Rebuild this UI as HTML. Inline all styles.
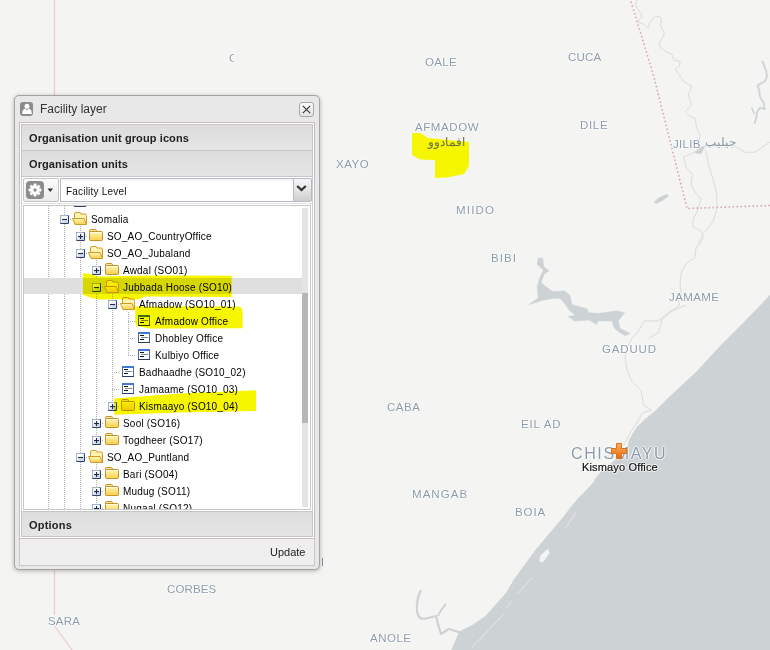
<!DOCTYPE html>
<html><head><meta charset="utf-8"><style>
html,body{margin:0;padding:0;width:770px;height:650px;overflow:hidden;background:#f4f4f2;font-family:"Liberation Sans",sans-serif}
.ml{position:absolute;white-space:nowrap;font-size:11.5px;line-height:1;color:#8b9bab;text-shadow:1px 0 1px rgba(255,255,255,.8),-1px 0 1px rgba(255,255,255,.8),0 1px 1px rgba(255,255,255,.8),0 -1px 1px rgba(255,255,255,.8)}
.ic{position:absolute;display:block}
.vl{position:absolute;width:1px;background:repeating-linear-gradient(to bottom,#b4b4b4 0 1px,transparent 1px 2px)}
.hl{position:absolute;height:1px;background:repeating-linear-gradient(to right,#b4b4b4 0 1px,transparent 1px 2px)}
.tt{position:absolute;white-space:nowrap;font-size:10px;letter-spacing:0.2px;line-height:1;color:#000}
.hd{position:absolute;left:21px;width:290px;background:linear-gradient(#dddddd,#e5e5e5);border:1px solid #c6c6c6;font-weight:bold;font-size:11px;color:#222}
</style></head><body>
<svg width="770" height="650" style="position:absolute;left:0;top:0">
 <defs>
  <linearGradient id="gf" x1="0" y1="0" x2="0" y2="1"><stop offset="0" stop-color="#fff7b8"/><stop offset="1" stop-color="#f7cf48"/></linearGradient>
  <linearGradient id="gb" x1="0" y1="0" x2="0.6" y2="1"><stop offset="0.3" stop-color="#ffffff"/><stop offset="1" stop-color="#c8d2ea"/></linearGradient>
 </defs>
 <!-- sea -->
 <path d="M770 295 L746 320 L720 346 L696 372 L670 396 L656 410 L644.3 419.7 L636.9 427.1 L632 434.5 L628.9 440.6 L627.5 447 L615 460 L604 469 L600.6 472 L594.5 479.4 L593.2 482.5 L588.3 488 L584.6 491.7 L578.5 497.8 L571.1 506.5 L563.7 516.3 L561.2 519.2 L535 550.6 L514 579.3 L506.3 592.4 L485.4 616 L472.3 625 L459.2 631.6 L451.4 650 L770 650 Z" fill="#cdd2d5"/>
 <!-- lake -->
 <path d="M542.7 258.2 L543.6 266.4 L549.1 270.9 L544.5 273.6 L540.9 282.7 L552.7 291.8 L564.5 290.9 L570.0 295.5 L571.8 304.5 L587.3 309.1 L588.2 312.7 L598.2 313.6 L616.4 310.9 L624.5 312.7 L618.2 320.9 L620.0 328.2 L630.0 333.6 L625.5 335.5 L620.0 332.7 L614.5 328.2 L611.8 320.9 L598.2 320.9 L596.4 324.5 L589.1 320.0 L574.5 320.9 L568.2 316.4 L575.5 315.5 L569.1 310.0 L565.5 304.5 L560.0 298.2 L554.5 298.2 L543.6 300.0 L529.1 304.5 L538.2 298.2 L537.3 286.4 L540.0 277.3 L543.6 270.0 L537.3 264.5 L538.2 258.2 Z" fill="#cdd2d5" stroke="#cdd2d5" stroke-width="0.6" stroke-linejoin="round"/>
 <!-- bottom river -->
 <path d="M421 590 Q416 600 417 611 Q418 619 424 619 L436 616 Q438 625 441 634 L449 629 L462 633" fill="none" stroke="#cdd2d5" stroke-width="2.2" stroke-linejoin="round"/>
 <path d="M438 616 Q441 609 446 604" fill="none" stroke="#cdd2d5" stroke-width="1.8"/>
 <!-- sea islands -->
 <path d="M540.3 555.8 L548.1 548.5 L549.4 553.2 L542.9 562.4 L539 561 Z" fill="#f4f4f2"/>
 <path d="M532.4 577.3 L517.3 594 M504.2 613.3 L471 648.6 M576.9 511.4 L565.1 528.4 M511.5 600.8 L506.3 608.1" stroke="#e6e9ea" stroke-width="1" fill="none"/>
 <!-- small lakes -->
 <path d="M655 202 Q660 197 667 195 L668 196 Q662 201 656 203 Z" fill="#cdd2d5" stroke="#cdd2d5" stroke-width="1.5"/>
 <path d="M696 153 L699 148 L704 147 L701 153 Z" fill="#cdd2d5" stroke="#cdd2d5" stroke-width="1.5"/>
 <!-- rivers -->
 <g fill="none" stroke="#dbdbd9" stroke-width="1" stroke-linejoin="round">
 <path d="M637.2 0.0 L635.4 4.9 L638.5 9.8 L642.2 16.0 L637.8 21.5 L644.6 24.6 L648.3 28.3 L649.5 23.4 L653.2 18.5 L655.7 16.0 L660.6 17.2 L661.2 22.8 L660.6 25.8 L664.3 33.2 L663.1 36.9 L659.4 43.1 L660.6 48.0 L666.2 51.7 L671.7 54.2 L674.2 60.3 L680.3 61.5 L679.1 66.5 L675.4 68.9 L677.8 72.6 L683.3 81.3 L691.7 86.4 L688.4 94.8 L691.7 105.0 L685.0 111.8 L688.4 115.1 L695.1 118.5 L696.8 128.7 L700.2 135.5 L698.5 142.2 L698.5 149.0"/><path d="M698.5 149.8 L683.7 157.2 L686.2 167.1 L692.3 174.5 L691.1 184.3 L694.8 191.7 L700.9 199.1 L697.2 211.4 L693.5 218.8 L692.3 226.2 L700.9 231.1 L703.4 238.5 L696.0 248.3 L694.8 258.2 L686.2 263.1 L681.2 272.9 L680.0 282.8 L681.2 292.6 L678.8 300.0 L679.6 305.3 L667.9 313.1 L658.2 320.9 L644.5 320.9 L638.7 330.7 L631.9 338.4 L627.0 348.2 L625.1 357.9 L627.0 370.0 L631.5 380.8 L640.8 390.0 L643.8 405.4 L651.5 410.0 L642.3 413.1 L636.2 423.8 L630.0 433.1 L623.8 445.4"/><path d="M705.8 149.8 L708.3 164.6 L713.2 179.4 L716.9 194.2 L716.9 208.9 L713.2 221.2 L703.4 233.5 L698.5 243.4"/><path d="M685.5 305.3 L671.8 311.2 L662.1 319.0 L660.1 326.8 L658.2 332.6 L648.4 338.4"/><path d="M703.0 146.0 L732.9 144.9 L745.2 152.3 L755.1 152.3 L760.0 148.6 L770.0 142.0"/>
 </g>
 <path d="M762.3 60.8 L766.2 70.8 L766.9 76.9 L764.6 81.5 L757.7 85.4 L759.2 90.8 L760.0 96.9 L763.8 103.1 L764.6 109.2 L760.0 107.7 L756.9 112.3 L756.2 118.5 L754.6 123.8" fill="none" stroke="#cdd2d5" stroke-width="1.8" stroke-linejoin="round"/>
 <path d="M751.5 107.7 L754.6 113.8" fill="none" stroke="#cdd2d5" stroke-width="1.5"/>
 <!-- pink borders -->
 <path d="M631 1.5 L654 77 L687 208.5 L770 205.5" fill="none" stroke="#d8a8b0" stroke-width="1.6" stroke-dasharray="1.6 2.4"/>
 <path d="M54.5 0 V615 M54.5 626 L72 650" fill="none" stroke="#ebcdd1" stroke-width="1.2"/>
 <!-- yellow map highlight -->
 <path d="M412 133 L420 133 L428 138 L469 142 L469 166 L464 174 L447 177.5 L435 178 L435 160 L420 159.5 L412 155 Z" fill="#f6f600"/>
</svg>
<div class="ml" style="left:425px;top:57px;letter-spacing:0.37px">OALE</div>
<div class="ml" style="left:568px;top:52px;letter-spacing:0.23px">CUCA</div>
<div class="ml" style="left:415px;top:122px;letter-spacing:0.58px">AFMADOW</div>
<div class="ml" style="left:580px;top:120px;letter-spacing:0.67px">DILE</div>
<div class="ml" style="left:336px;top:159px;letter-spacing:0.53px">XAYO</div>
<div class="ml" style="left:673px;top:139px;letter-spacing:0.33px">JILIB</div>
<div class="ml" style="left:456px;top:205px;letter-spacing:1.2px">MIIDO</div>
<div class="ml" style="left:491px;top:253px;letter-spacing:1.03px">BIBI</div>
<div class="ml" style="left:669px;top:292px;letter-spacing:0.42px">JAMAME</div>
<div class="ml" style="left:602px;top:344px;letter-spacing:0.82px">GADUUD</div>
<div class="ml" style="left:387px;top:402px;letter-spacing:0.57px">CABA</div>
<div class="ml" style="left:521px;top:419px;letter-spacing:0.82px">EIL AD</div>
<div class="ml" style="left:412px;top:489px;letter-spacing:1.06px">MANGAB</div>
<div class="ml" style="left:515px;top:507px;letter-spacing:0.93px">BOIA</div>
<div class="ml" style="left:167px;top:584px;letter-spacing:0.14px">CORBES</div>
<div class="ml" style="left:48px;top:616px;letter-spacing:0.17px">SARA</div>
<div class="ml" style="left:370px;top:633px;letter-spacing:0.5px">ANOLE</div>
<div class="ml" style="left:571px;top:446px;font-size:16px;letter-spacing:1.63px">CHISMAYU</div>
<div class="ml" style="left:229px;top:53px;width:5px;overflow:hidden">C</div>
<div style="position:absolute;left:322px;top:558px;width:1px;height:8px;background:#8596a6"></div>
<div style="position:absolute;left:428px;top:136px;font-size:12px;line-height:1;color:#6a7050">افمادوو</div>
<div style="position:absolute;left:705px;top:137px;font-size:11.5px;line-height:1;color:#8b9bab">جيليب</div>
<!-- marker -->
<svg style="position:absolute;left:611px;top:443px" width="16" height="16" viewBox="0 0 16 16">
 <defs><linearGradient id="go" x1="0" y1="0" x2="0" y2="1"><stop offset="0" stop-color="#f9b060"/><stop offset="1" stop-color="#e86a10"/></linearGradient></defs>
 <path d="M5.5 0.5 H10.5 V5.5 H15.5 V10.5 H10.5 V15.5 H5.5 V10.5 H0.5 V5.5 H5.5 Z" fill="url(#go)" stroke="#e07018" stroke-width="1"/>
</svg>
<div style="position:absolute;left:582px;top:462px;font-size:11px;letter-spacing:0.15px;line-height:1;color:#111;-webkit-text-stroke:0.2px #111;white-space:nowrap;text-shadow:1px 0 1px #fff,-1px 0 1px #fff,0 1px 1px #fff,0 -1px 1px #fff">Kismayo Office</div>

<!-- window -->
<div style="position:absolute;left:14px;top:95px;width:304px;height:473px;border:1px solid #a4a4a4;border-radius:5px;background:#e8e8e8;box-shadow:0 1px 4px rgba(0,0,0,0.28)"></div>
<div style="position:absolute;left:20px;top:102px;width:13px;height:14px;background:#8c8c8c;border-radius:3px"></div>
<svg style="position:absolute;left:20px;top:102px" width="13" height="14" viewBox="0 0 13 14"><circle cx="7" cy="4.2" r="2.5" fill="#fff"/><path d="M2.2 12 Q2.2 7.4 5.2 6.6 L7 8.2 L8.8 6.6 Q11.8 7.4 11.8 12 Z" fill="#fff"/></svg>
<div style="position:absolute;left:40px;top:103px;font-size:12px;line-height:1;color:#333;white-space:nowrap">Facility layer</div>
<div style="position:absolute;left:299px;top:102px;width:13px;height:13px;border:1px solid #a8a8a8;border-radius:3px;background:linear-gradient(#fafafa,#e4e4e4)"></div>
<svg style="position:absolute;left:299px;top:102px" width="15" height="15" viewBox="0 0 15 15"><path d="M3.8 3.8 L11.2 11.2 M11.2 3.8 L3.8 11.2" stroke="#333" stroke-width="1.1"/></svg>
<!-- body frame -->
<div style="position:absolute;left:19px;top:122px;width:294px;height:415px;border:1px solid #cbbaba;background:#fff"></div>
<div class="hd" style="top:124px;height:25px"></div>
<div style="position:absolute;left:29px;top:133px;font:bold 11px/1 'Liberation Sans';letter-spacing:0.1px;color:#222;white-space:nowrap">Organisation unit group icons</div>
<div class="hd" style="top:150px;height:25px"></div>
<div style="position:absolute;left:29px;top:159px;font:bold 11px/1 'Liberation Sans';letter-spacing:0.1px;color:#222;white-space:nowrap">Organisation units</div>
<!-- toolbar -->
<div style="position:absolute;left:21px;top:177px;width:290px;height:334px;border-left:1px solid #cecece;border-right:1px solid #cecece;background:#fff"></div>
<div style="position:absolute;left:22px;top:203px;width:290px;height:1px;background:#e2e2e2"></div>
<div style="position:absolute;left:23px;top:178px;width:34px;height:22px;border:1px solid #c4c4c4;border-radius:2px;background:linear-gradient(#fbfbfb,#ececec)"></div>
<div style="position:absolute;left:26px;top:181px;width:18px;height:18px;background:#8c8c8c;border-radius:4px"></div>
<svg style="position:absolute;left:26px;top:181px" width="18" height="18" viewBox="0 0 18 18">
 <g fill="#fff"><circle cx="9" cy="9" r="4.5"/>
 <rect x="7.6" y="2.6" width="2.8" height="12.8" rx="0.6"/>
 <rect x="7.6" y="2.6" width="2.8" height="12.8" rx="0.6" transform="rotate(45 9 9)"/>
 <rect x="7.6" y="2.6" width="2.8" height="12.8" rx="0.6" transform="rotate(90 9 9)"/>
 <rect x="7.6" y="2.6" width="2.8" height="12.8" rx="0.6" transform="rotate(135 9 9)"/></g>
 <circle cx="9" cy="9" r="1.7" fill="#8c8c8c"/>
</svg>
<svg style="position:absolute;left:47px;top:188px" width="7" height="5" viewBox="0 0 7 5"><path d="M0.5 0.5 H6 L3.25 4 Z" fill="#333"/></svg>
<div style="position:absolute;left:60px;top:178px;width:232px;height:22px;border:1px solid #b5b8c8;border-right:none;background:linear-gradient(#f4f4f4,#fff 4px)"></div>
<div style="position:absolute;left:66px;top:187px;font-size:10px;letter-spacing:0.2px;line-height:1;color:#111;white-space:nowrap">Facility Level</div>
<div style="position:absolute;left:293px;top:178px;width:17px;height:22px;border:1px solid #b5b8c8;border-radius:0 2px 2px 0;background:linear-gradient(#f6f6f6,#e6e6e6 45%,#cfcfcf)"></div>
<svg style="position:absolute;left:296px;top:184px" width="11" height="8" viewBox="0 0 11 8"><path d="M1.2 2 L5.5 6 L9.8 2" fill="none" stroke="#333" stroke-width="2.3"/></svg>
<!-- tree -->
<div style="position:absolute;left:23px;top:205px;width:286px;height:303px;border:1px solid #c8c8c8;background:#fff;overflow:hidden">
</div>
<div style="position:absolute;left:24px;top:206px;width:286px;height:303px;overflow:hidden">
 <div style="position:absolute;left:-24px;top:-206px;width:770px;height:650px">
 <div class="vl" style="left:48px;top:206px;height:303px"></div>
<div class="vl" style="left:64px;top:206px;height:303px"></div>
<div class="vl" style="left:80px;top:226px;height:283px"></div>
<div class="vl" style="left:96px;top:260px;height:180px"></div>
<div class="vl" style="left:112px;top:294px;height:112px"></div>
<div class="vl" style="left:128px;top:312px;height:43px"></div>
<div class="vl" style="left:96px;top:464px;height:45px"></div>
<div style="position:absolute;left:24px;top:278px;width:278px;height:16px;background:#dfdfdf"></div>
<div class="hl" style="left:64px;top:219px;width:8px"></div>
<svg class="ic" style="left:60px;top:215px" width="9" height="9" viewBox="0 0 9 9"><rect x="0" y="0" width="9" height="9" rx="1.3" fill="#2f3f5e"/><rect x="0" y="0" width="8" height="8" rx="1.1" fill="#a4b4d0"/><rect x="1" y="1" width="7" height="7" fill="url(#gb)"/><rect x="2" y="4" width="5" height="1.1" fill="#1e2c48"/></svg>
<svg class="ic" style="left:72px;top:212px" width="16" height="14" viewBox="0 0 16 14"><path d="M2.5 6 V2 Q2.5 0.5 4 0.5 H7.5 Q9 0.5 9 2 H13 Q14.5 2 14.5 3.5 V11.5 Q14.5 12.5 13.5 12.5 H3" fill="#fff3b0" stroke="#d09a28" stroke-width="1"/><path d="M0.5 6.5 H12 L14.5 12.5 H3 Z" fill="url(#gf)" stroke="#d09a28" stroke-width="1" stroke-linejoin="round"/></svg>
<div class="tt" style="left:91px;top:215px">Somalia</div>
<div class="hl" style="left:80px;top:236px;width:8px"></div>
<svg class="ic" style="left:76px;top:232px" width="9" height="9" viewBox="0 0 9 9"><rect x="0" y="0" width="9" height="9" rx="1.3" fill="#2f3f5e"/><rect x="0" y="0" width="8" height="8" rx="1.1" fill="#a4b4d0"/><rect x="1" y="1" width="7" height="7" fill="url(#gb)"/><rect x="2" y="4" width="5" height="1.1" fill="#1e2c48"/><rect x="3.95" y="2" width="1.1" height="5" fill="#1e2c48"/></svg>
<svg class="ic" style="left:88px;top:229px" width="16" height="14" viewBox="0 0 16 14"><path d="M1.5 3 V1.8 Q1.5 0.5 2.8 0.5 H7.2 Q8.5 0.5 8.5 1.8 V2.5" fill="#fbe9a0" stroke="#c8922a" stroke-width="1"/><rect x="1.5" y="2.5" width="13" height="9" rx="0.8" fill="url(#gf)" stroke="#c8922a" stroke-width="1"/><path d="M2.5 3.6 H13.5" stroke="#fffce8" stroke-width="1"/></svg>
<div class="tt" style="left:107px;top:232px">SO_AO_CountryOffice</div>
<div class="hl" style="left:80px;top:253px;width:8px"></div>
<svg class="ic" style="left:76px;top:249px" width="9" height="9" viewBox="0 0 9 9"><rect x="0" y="0" width="9" height="9" rx="1.3" fill="#2f3f5e"/><rect x="0" y="0" width="8" height="8" rx="1.1" fill="#a4b4d0"/><rect x="1" y="1" width="7" height="7" fill="url(#gb)"/><rect x="2" y="4" width="5" height="1.1" fill="#1e2c48"/></svg>
<svg class="ic" style="left:88px;top:246px" width="16" height="14" viewBox="0 0 16 14"><path d="M2.5 6 V2 Q2.5 0.5 4 0.5 H7.5 Q9 0.5 9 2 H13 Q14.5 2 14.5 3.5 V11.5 Q14.5 12.5 13.5 12.5 H3" fill="#fff3b0" stroke="#d09a28" stroke-width="1"/><path d="M0.5 6.5 H12 L14.5 12.5 H3 Z" fill="url(#gf)" stroke="#d09a28" stroke-width="1" stroke-linejoin="round"/></svg>
<div class="tt" style="left:107px;top:249px">SO_AO_Jubaland</div>
<div class="hl" style="left:96px;top:270px;width:8px"></div>
<svg class="ic" style="left:92px;top:266px" width="9" height="9" viewBox="0 0 9 9"><rect x="0" y="0" width="9" height="9" rx="1.3" fill="#2f3f5e"/><rect x="0" y="0" width="8" height="8" rx="1.1" fill="#a4b4d0"/><rect x="1" y="1" width="7" height="7" fill="url(#gb)"/><rect x="2" y="4" width="5" height="1.1" fill="#1e2c48"/><rect x="3.95" y="2" width="1.1" height="5" fill="#1e2c48"/></svg>
<svg class="ic" style="left:104px;top:263px" width="16" height="14" viewBox="0 0 16 14"><path d="M1.5 3 V1.8 Q1.5 0.5 2.8 0.5 H7.2 Q8.5 0.5 8.5 1.8 V2.5" fill="#fbe9a0" stroke="#c8922a" stroke-width="1"/><rect x="1.5" y="2.5" width="13" height="9" rx="0.8" fill="url(#gf)" stroke="#c8922a" stroke-width="1"/><path d="M2.5 3.6 H13.5" stroke="#fffce8" stroke-width="1"/></svg>
<div class="tt" style="left:123px;top:266px">Awdal (SO01)</div>
<div class="hl" style="left:96px;top:287px;width:8px"></div>
<svg class="ic" style="left:92px;top:283px" width="9" height="9" viewBox="0 0 9 9"><rect x="0" y="0" width="9" height="9" rx="1.3" fill="#2f3f5e"/><rect x="0" y="0" width="8" height="8" rx="1.1" fill="#a4b4d0"/><rect x="1" y="1" width="7" height="7" fill="url(#gb)"/><rect x="2" y="4" width="5" height="1.1" fill="#1e2c48"/></svg>
<svg class="ic" style="left:104px;top:280px" width="16" height="14" viewBox="0 0 16 14"><path d="M2.5 6 V2 Q2.5 0.5 4 0.5 H7.5 Q9 0.5 9 2 H13 Q14.5 2 14.5 3.5 V11.5 Q14.5 12.5 13.5 12.5 H3" fill="#fff3b0" stroke="#d09a28" stroke-width="1"/><path d="M0.5 6.5 H12 L14.5 12.5 H3 Z" fill="url(#gf)" stroke="#d09a28" stroke-width="1" stroke-linejoin="round"/></svg>
<div class="tt" style="left:123px;top:283px">Jubbada Hoose (SO10)</div>
<div class="hl" style="left:112px;top:304px;width:8px"></div>
<svg class="ic" style="left:108px;top:300px" width="9" height="9" viewBox="0 0 9 9"><rect x="0" y="0" width="9" height="9" rx="1.3" fill="#2f3f5e"/><rect x="0" y="0" width="8" height="8" rx="1.1" fill="#a4b4d0"/><rect x="1" y="1" width="7" height="7" fill="url(#gb)"/><rect x="2" y="4" width="5" height="1.1" fill="#1e2c48"/></svg>
<svg class="ic" style="left:120px;top:297px" width="16" height="14" viewBox="0 0 16 14"><path d="M2.5 6 V2 Q2.5 0.5 4 0.5 H7.5 Q9 0.5 9 2 H13 Q14.5 2 14.5 3.5 V11.5 Q14.5 12.5 13.5 12.5 H3" fill="#fff3b0" stroke="#d09a28" stroke-width="1"/><path d="M0.5 6.5 H12 L14.5 12.5 H3 Z" fill="url(#gf)" stroke="#d09a28" stroke-width="1" stroke-linejoin="round"/></svg>
<div class="tt" style="left:139px;top:300px">Afmadow (SO10_01)</div>
<div class="hl" style="left:128px;top:321px;width:8px"></div>
<svg class="ic" style="left:138px;top:315px" width="12" height="11" viewBox="0 0 12 11"><rect x="0.5" y="0.5" width="11" height="10" fill="#fff" stroke="#4a6a9c"/><rect x="0" y="0" width="12" height="2" fill="#3f78d8"/><rect x="0" y="10" width="12" height="1" fill="#2e3e60"/><rect x="2" y="3" width="4" height="1" fill="#111"/><rect x="3" y="5" width="7" height="1" fill="#888"/><rect x="2" y="7" width="4" height="1" fill="#111"/></svg>
<div class="tt" style="left:155px;top:317px">Afmadow Office</div>
<div class="hl" style="left:128px;top:338px;width:8px"></div>
<svg class="ic" style="left:138px;top:332px" width="12" height="11" viewBox="0 0 12 11"><rect x="0.5" y="0.5" width="11" height="10" fill="#fff" stroke="#4a6a9c"/><rect x="0" y="0" width="12" height="2" fill="#3f78d8"/><rect x="0" y="10" width="12" height="1" fill="#2e3e60"/><rect x="2" y="3" width="4" height="1" fill="#111"/><rect x="3" y="5" width="7" height="1" fill="#888"/><rect x="2" y="7" width="4" height="1" fill="#111"/></svg>
<div class="tt" style="left:155px;top:334px">Dhobley Office</div>
<div class="hl" style="left:128px;top:355px;width:8px"></div>
<svg class="ic" style="left:138px;top:349px" width="12" height="11" viewBox="0 0 12 11"><rect x="0.5" y="0.5" width="11" height="10" fill="#fff" stroke="#4a6a9c"/><rect x="0" y="0" width="12" height="2" fill="#3f78d8"/><rect x="0" y="10" width="12" height="1" fill="#2e3e60"/><rect x="2" y="3" width="4" height="1" fill="#111"/><rect x="3" y="5" width="7" height="1" fill="#888"/><rect x="2" y="7" width="4" height="1" fill="#111"/></svg>
<div class="tt" style="left:155px;top:351px">Kulbiyo Office</div>
<div class="hl" style="left:112px;top:372px;width:8px"></div>
<svg class="ic" style="left:122px;top:366px" width="12" height="11" viewBox="0 0 12 11"><rect x="0.5" y="0.5" width="11" height="10" fill="#fff" stroke="#4a6a9c"/><rect x="0" y="0" width="12" height="2" fill="#3f78d8"/><rect x="0" y="10" width="12" height="1" fill="#2e3e60"/><rect x="2" y="3" width="4" height="1" fill="#111"/><rect x="3" y="5" width="7" height="1" fill="#888"/><rect x="2" y="7" width="4" height="1" fill="#111"/></svg>
<div class="tt" style="left:139px;top:368px">Badhaadhe (SO10_02)</div>
<div class="hl" style="left:112px;top:389px;width:8px"></div>
<svg class="ic" style="left:122px;top:383px" width="12" height="11" viewBox="0 0 12 11"><rect x="0.5" y="0.5" width="11" height="10" fill="#fff" stroke="#4a6a9c"/><rect x="0" y="0" width="12" height="2" fill="#3f78d8"/><rect x="0" y="10" width="12" height="1" fill="#2e3e60"/><rect x="2" y="3" width="4" height="1" fill="#111"/><rect x="3" y="5" width="7" height="1" fill="#888"/><rect x="2" y="7" width="4" height="1" fill="#111"/></svg>
<div class="tt" style="left:139px;top:385px">Jamaame (SO10_03)</div>
<div class="hl" style="left:112px;top:406px;width:8px"></div>
<svg class="ic" style="left:108px;top:402px" width="9" height="9" viewBox="0 0 9 9"><rect x="0" y="0" width="9" height="9" rx="1.3" fill="#2f3f5e"/><rect x="0" y="0" width="8" height="8" rx="1.1" fill="#a4b4d0"/><rect x="1" y="1" width="7" height="7" fill="url(#gb)"/><rect x="2" y="4" width="5" height="1.1" fill="#1e2c48"/><rect x="3.95" y="2" width="1.1" height="5" fill="#1e2c48"/></svg>
<svg class="ic" style="left:120px;top:399px" width="16" height="14" viewBox="0 0 16 14"><path d="M1.5 3 V1.8 Q1.5 0.5 2.8 0.5 H7.2 Q8.5 0.5 8.5 1.8 V2.5" fill="#fbe9a0" stroke="#c8922a" stroke-width="1"/><rect x="1.5" y="2.5" width="13" height="9" rx="0.8" fill="url(#gf)" stroke="#c8922a" stroke-width="1"/><path d="M2.5 3.6 H13.5" stroke="#fffce8" stroke-width="1"/></svg>
<div class="tt" style="left:139px;top:402px">Kismaayo (SO10_04)</div>
<div class="hl" style="left:96px;top:423px;width:8px"></div>
<svg class="ic" style="left:92px;top:419px" width="9" height="9" viewBox="0 0 9 9"><rect x="0" y="0" width="9" height="9" rx="1.3" fill="#2f3f5e"/><rect x="0" y="0" width="8" height="8" rx="1.1" fill="#a4b4d0"/><rect x="1" y="1" width="7" height="7" fill="url(#gb)"/><rect x="2" y="4" width="5" height="1.1" fill="#1e2c48"/><rect x="3.95" y="2" width="1.1" height="5" fill="#1e2c48"/></svg>
<svg class="ic" style="left:104px;top:416px" width="16" height="14" viewBox="0 0 16 14"><path d="M1.5 3 V1.8 Q1.5 0.5 2.8 0.5 H7.2 Q8.5 0.5 8.5 1.8 V2.5" fill="#fbe9a0" stroke="#c8922a" stroke-width="1"/><rect x="1.5" y="2.5" width="13" height="9" rx="0.8" fill="url(#gf)" stroke="#c8922a" stroke-width="1"/><path d="M2.5 3.6 H13.5" stroke="#fffce8" stroke-width="1"/></svg>
<div class="tt" style="left:123px;top:419px">Sool (SO16)</div>
<div class="hl" style="left:96px;top:440px;width:8px"></div>
<svg class="ic" style="left:92px;top:436px" width="9" height="9" viewBox="0 0 9 9"><rect x="0" y="0" width="9" height="9" rx="1.3" fill="#2f3f5e"/><rect x="0" y="0" width="8" height="8" rx="1.1" fill="#a4b4d0"/><rect x="1" y="1" width="7" height="7" fill="url(#gb)"/><rect x="2" y="4" width="5" height="1.1" fill="#1e2c48"/><rect x="3.95" y="2" width="1.1" height="5" fill="#1e2c48"/></svg>
<svg class="ic" style="left:104px;top:433px" width="16" height="14" viewBox="0 0 16 14"><path d="M1.5 3 V1.8 Q1.5 0.5 2.8 0.5 H7.2 Q8.5 0.5 8.5 1.8 V2.5" fill="#fbe9a0" stroke="#c8922a" stroke-width="1"/><rect x="1.5" y="2.5" width="13" height="9" rx="0.8" fill="url(#gf)" stroke="#c8922a" stroke-width="1"/><path d="M2.5 3.6 H13.5" stroke="#fffce8" stroke-width="1"/></svg>
<div class="tt" style="left:123px;top:436px">Togdheer (SO17)</div>
<div class="hl" style="left:80px;top:457px;width:8px"></div>
<svg class="ic" style="left:76px;top:453px" width="9" height="9" viewBox="0 0 9 9"><rect x="0" y="0" width="9" height="9" rx="1.3" fill="#2f3f5e"/><rect x="0" y="0" width="8" height="8" rx="1.1" fill="#a4b4d0"/><rect x="1" y="1" width="7" height="7" fill="url(#gb)"/><rect x="2" y="4" width="5" height="1.1" fill="#1e2c48"/></svg>
<svg class="ic" style="left:88px;top:450px" width="16" height="14" viewBox="0 0 16 14"><path d="M2.5 6 V2 Q2.5 0.5 4 0.5 H7.5 Q9 0.5 9 2 H13 Q14.5 2 14.5 3.5 V11.5 Q14.5 12.5 13.5 12.5 H3" fill="#fff3b0" stroke="#d09a28" stroke-width="1"/><path d="M0.5 6.5 H12 L14.5 12.5 H3 Z" fill="url(#gf)" stroke="#d09a28" stroke-width="1" stroke-linejoin="round"/></svg>
<div class="tt" style="left:107px;top:453px">SO_AO_Puntland</div>
<div class="hl" style="left:96px;top:474px;width:8px"></div>
<svg class="ic" style="left:92px;top:470px" width="9" height="9" viewBox="0 0 9 9"><rect x="0" y="0" width="9" height="9" rx="1.3" fill="#2f3f5e"/><rect x="0" y="0" width="8" height="8" rx="1.1" fill="#a4b4d0"/><rect x="1" y="1" width="7" height="7" fill="url(#gb)"/><rect x="2" y="4" width="5" height="1.1" fill="#1e2c48"/><rect x="3.95" y="2" width="1.1" height="5" fill="#1e2c48"/></svg>
<svg class="ic" style="left:104px;top:467px" width="16" height="14" viewBox="0 0 16 14"><path d="M1.5 3 V1.8 Q1.5 0.5 2.8 0.5 H7.2 Q8.5 0.5 8.5 1.8 V2.5" fill="#fbe9a0" stroke="#c8922a" stroke-width="1"/><rect x="1.5" y="2.5" width="13" height="9" rx="0.8" fill="url(#gf)" stroke="#c8922a" stroke-width="1"/><path d="M2.5 3.6 H13.5" stroke="#fffce8" stroke-width="1"/></svg>
<div class="tt" style="left:123px;top:470px">Bari (SO04)</div>
<div class="hl" style="left:96px;top:491px;width:8px"></div>
<svg class="ic" style="left:92px;top:487px" width="9" height="9" viewBox="0 0 9 9"><rect x="0" y="0" width="9" height="9" rx="1.3" fill="#2f3f5e"/><rect x="0" y="0" width="8" height="8" rx="1.1" fill="#a4b4d0"/><rect x="1" y="1" width="7" height="7" fill="url(#gb)"/><rect x="2" y="4" width="5" height="1.1" fill="#1e2c48"/><rect x="3.95" y="2" width="1.1" height="5" fill="#1e2c48"/></svg>
<svg class="ic" style="left:104px;top:484px" width="16" height="14" viewBox="0 0 16 14"><path d="M1.5 3 V1.8 Q1.5 0.5 2.8 0.5 H7.2 Q8.5 0.5 8.5 1.8 V2.5" fill="#fbe9a0" stroke="#c8922a" stroke-width="1"/><rect x="1.5" y="2.5" width="13" height="9" rx="0.8" fill="url(#gf)" stroke="#c8922a" stroke-width="1"/><path d="M2.5 3.6 H13.5" stroke="#fffce8" stroke-width="1"/></svg>
<div class="tt" style="left:123px;top:487px">Mudug (SO11)</div>
<div class="hl" style="left:96px;top:508px;width:8px"></div>
<svg class="ic" style="left:92px;top:504px" width="9" height="9" viewBox="0 0 9 9"><rect x="0" y="0" width="9" height="9" rx="1.3" fill="#2f3f5e"/><rect x="0" y="0" width="8" height="8" rx="1.1" fill="#a4b4d0"/><rect x="1" y="1" width="7" height="7" fill="url(#gb)"/><rect x="2" y="4" width="5" height="1.1" fill="#1e2c48"/><rect x="3.95" y="2" width="1.1" height="5" fill="#1e2c48"/></svg>
<svg class="ic" style="left:104px;top:501px" width="16" height="14" viewBox="0 0 16 14"><path d="M1.5 3 V1.8 Q1.5 0.5 2.8 0.5 H7.2 Q8.5 0.5 8.5 1.8 V2.5" fill="#fbe9a0" stroke="#c8922a" stroke-width="1"/><rect x="1.5" y="2.5" width="13" height="9" rx="0.8" fill="url(#gf)" stroke="#c8922a" stroke-width="1"/><path d="M2.5 3.6 H13.5" stroke="#fffce8" stroke-width="1"/></svg>
<div class="tt" style="left:123px;top:504px">Nugaal (SO12)</div>
<div style="position:absolute;left:74px;top:205px;width:12px;height:2px;background:#34486a"></div>
 </div>
</div>
<div style="position:absolute;left:302px;top:208px;width:6px;height:299px;background:#e4e4e4"></div>
<div style="position:absolute;left:302px;top:293px;width:6px;height:130px;background:#b6b6b6"></div>
<!-- options -->
<div class="hd" style="top:511px;height:24px"></div>
<div style="position:absolute;left:29px;top:520px;font:bold 11px/1 'Liberation Sans';letter-spacing:0.2px;color:#222;white-space:nowrap">Options</div>
<!-- footer -->
<div style="position:absolute;left:19px;top:538px;width:294px;height:26px;border:1px solid #c8c8c8;border-top:1px solid #cbbaba;background:#efefef"></div>
<div style="position:absolute;left:270px;top:547px;font-size:11px;line-height:1;color:#222;white-space:nowrap">Update</div>
<!-- highlights -->
<svg width="770" height="650" style="position:absolute;left:0;top:0;mix-blend-mode:multiply">
 <path d="M83 273 Q90 273.5 98 276.4 L150 275.5 L231.7 275.8 L231.7 297 L145 296.5 L139 299.3 L100 299.4 Q90 298.5 83 294.5 Z" fill="#f6f600"/>
 <path d="M135.3 306.5 L238 306.5 Q242.7 307 242.7 312 L242.7 328.2 L150 328.5 L138.5 326.5 Q135.3 325 135.3 322 Z" fill="#f6f600"/>
 <path d="M114.3 398.5 L180 393.4 L256 390.2 L256 411 L180 412.5 L114.3 414.8 Z" fill="#f6f600"/>
</svg>
</body></html>
